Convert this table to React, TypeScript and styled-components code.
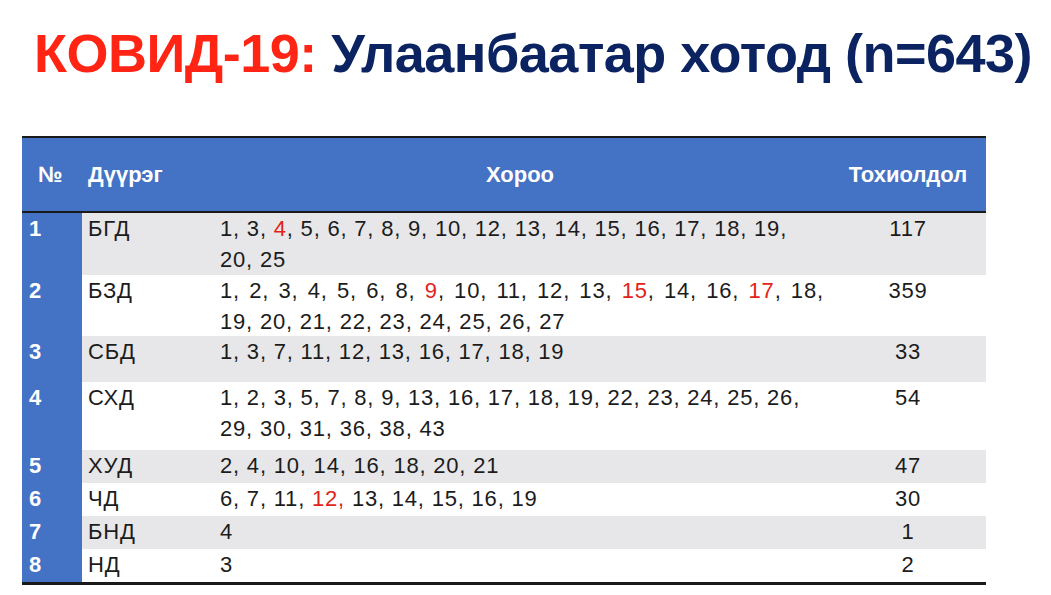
import styled, { createGlobalStyle } from "styled-components";

const blue = "#4472c4";
const stripe = "#e7e7e9";

const GlobalStyle = createGlobalStyle`
  html, body {
    margin: 0;
    padding: 0;
    background: #ffffff;
  }
`;

type Part = { t: string; red?: boolean };
type Row = {
  no: string;
  district: string;
  lines: Part[][];
  cases: string;
  height: number;
  spread?: boolean;
};

const r = (t: string): Part => ({ t, red: true });
const p = (t: string): Part => ({ t });

const rows: Row[] = [
  {
    no: "1",
    district: "БГД",
    lines: [
      [p("1, 3, "), r("4"), p(", 5, 6, 7, 8, 9, 10, 12, 13, 14, 15, 16, 17, 18, 19,")],
      [p("20, 25")],
    ],
    cases: "117",
    height: 62,
  },
  {
    no: "2",
    district: "БЗД",
    lines: [
      [p("1, 2, 3, 4, 5, 6, 8, "), r("9"), p(", 10, 11, 12, 13, "), r("15"), p(", 14, 16, "), r("17"), p(", 18,")],
      [p("19, 20, 21, 22, 23, 24, 25, 26, 27")],
    ],
    cases: "359",
    height: 61,
    spread: true,
  },
  { no: "3", district: "СБД", lines: [[p("1, 3, 7, 11, 12, 13, 16, 17, 18, 19")]], cases: "33", height: 46 },
  {
    no: "4",
    district: "СХД",
    lines: [
      [p("1, 2, 3, 5, 7, 8, 9, 13, 16, 17, 18, 19, 22, 23, 24, 25, 26,")],
      [p("29, 30, 31, 36, 38, 43")],
    ],
    cases: "54",
    height: 68,
  },
  { no: "5", district: "ХУД", lines: [[p("2, 4, 10, 14, 16, 18, 20, 21")]], cases: "47", height: 33 },
  {
    no: "6",
    district: "ЧД",
    lines: [[p("6, 7, 11, "), r("12,"), p(" 13, 14, 15, 16, 19")]],
    cases: "30",
    height: 33,
  },
  { no: "7", district: "БНД", lines: [[p("4")]], cases: "1", height: 33 },
  { no: "8", district: "НД", lines: [[p("3")]], cases: "2", height: 33 },
];

export default function App() {
  return (
    <>
      <GlobalStyle />
      <Slide>
        <Title>
          <Accent>КОВИД-19:</Accent> Улаанбаатар хотод (n=643)
        </Title>
        <Table>
          <HeaderRow>
            <HeadCell>№</HeadCell>
            <HeadCell>Дүүрэг</HeadCell>
            <HeadCell $center>Хороо</HeadCell>
            <HeadCell $center>Тохиолдол</HeadCell>
          </HeaderRow>
          {rows.map((row, i) => (
            <BodyRow key={row.no} $shade={i % 2 === 0} $height={row.height}>
              <NumCell>{row.no}</NumCell>
              <Cell>{row.district}</Cell>
              <WardCell>
                {row.lines.map((line, k) => (
                  <WardLine key={k} $spread={row.spread && k === 0}>
                    {line.map((w, j) => (w.red ? <Red key={j}>{w.t}</Red> : <span key={j}>{w.t}</span>))}
                  </WardLine>
                ))}
              </WardCell>
              <Cell $center>{row.cases}</Cell>
            </BodyRow>
          ))}
        </Table>
      </Slide>
    </>
  );
}

const Slide = styled.div`
  width: 1051px;
  height: 595px;
  overflow: hidden;
  display: flex;
  flex-direction: column;
  font-family: "Liberation Sans", Arial, sans-serif;
`;

const Title = styled.h1`
  margin: 0;
  padding: 20px 0 0 34px;
  height: 136px;
  flex: none;
  box-sizing: border-box;
  font-size: 54px;
  line-height: 66px;
  font-weight: bold;
  color: #0b2461;
  white-space: nowrap;
  letter-spacing: -0.5px;
`;

const Accent = styled.span`
  color: #ff2414;
`;

const Table = styled.div`
  margin-left: 22px;
  width: 964px;
  border-top: 2px solid #1a1a1a;
  border-bottom: 3px solid #1a1a1a;
`;

const grid = `
  display: grid;
  grid-template-columns: 60px 128px 620px 156px;
`;

const HeaderRow = styled.div`
  ${grid}
  height: 73px;
  align-items: center;
  background: ${blue};
  border-bottom: 2px solid #1a1a1a;
`;

const HeadCell = styled.div<{ $center?: boolean }>`
  color: #ffffff;
  font-weight: bold;
  font-size: 22px;
  padding-left: ${(p) => (p.$center ? "0" : "6px")};
  text-align: ${(p) => (p.$center ? "center" : "left")};
  &:first-child {
    padding-left: 16px;
  }
`;

const BodyRow = styled.div<{ $shade: boolean; $height: number }>`
  ${grid}
  height: ${(p) => p.$height}px;
  background: ${(p) => (p.$shade ? stripe : "#ffffff")};
  font-size: 22px;
  line-height: 31px;
  letter-spacing: 0.8px;
  color: #1c1c1c;
`;

const NumCell = styled.div`
  background: ${blue};
  color: #ffffff;
  font-weight: bold;
  padding-left: 7px;
  letter-spacing: 0;
`;

const Cell = styled.div<{ $center?: boolean }>`
  padding-left: ${(p) => (p.$center ? "0" : "6px")};
  text-align: ${(p) => (p.$center ? "center" : "left")};
`;

const WardCell = styled.div`
  padding: 0 0 0 10px;
`;

const WardLine = styled.div<{ $spread?: boolean }>`
  white-space: nowrap;
  word-spacing: ${(p) => (p.$spread ? "2.4px" : "0")};
`;

const Red = styled.span`
  color: #e2231a;
`;
